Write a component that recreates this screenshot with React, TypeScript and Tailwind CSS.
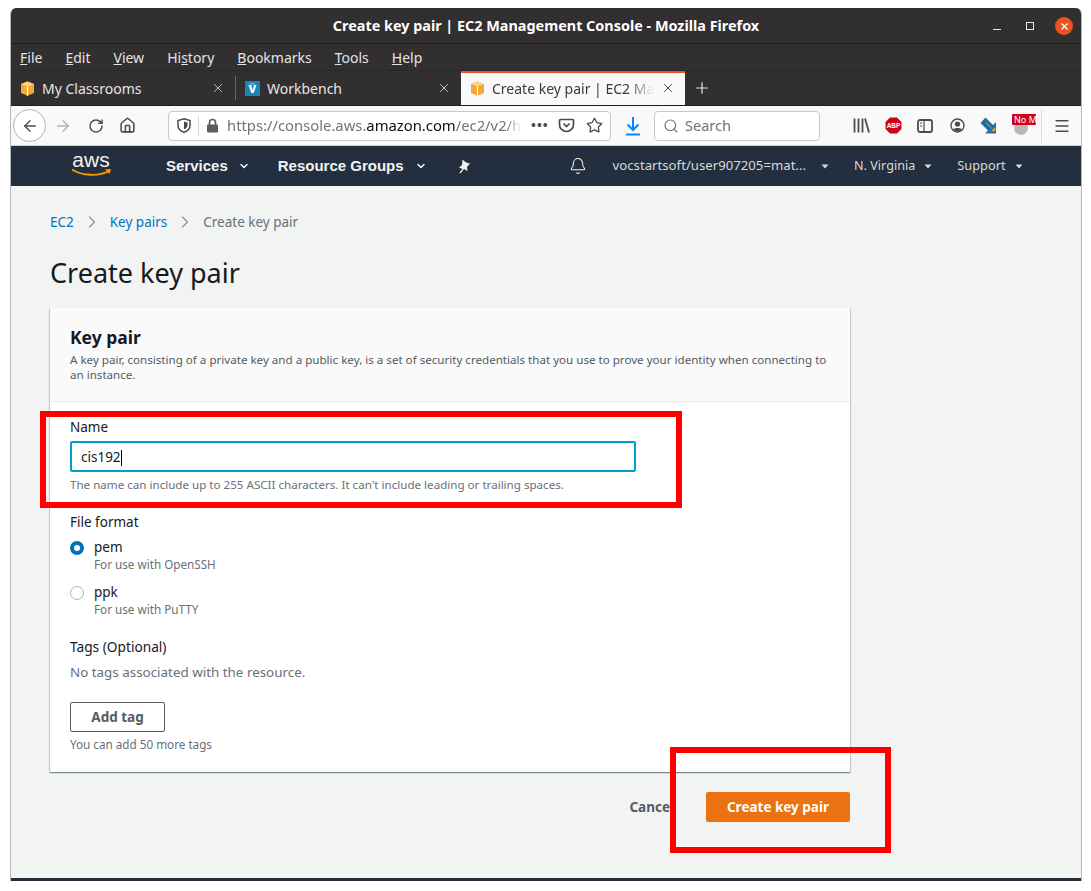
import React from 'react';
import {ArrowLeft, ArrowRight, RotateCw, Home, Star, Search, Bell, ChevronDown, ChevronRight, X, Plus, Menu} from 'lucide-react';

const font = "font-['Noto_Sans',sans-serif]";

const Caret = () => (
    <svg width="8" height="5" viewBox="0 0 8 5" className="shrink-0"><path d="M0.5 0.5h7L4 4.5z" fill="#d5dbdb" /></svg>
);

const BoxIcon = () => (
    <svg width="15" height="15" viewBox="0 0 15 15" className="shrink-0">
        <path d="M7.5 0.5 14 3v9l-6.5 2.8L1 12V3z" fill="#f2a93b" />
        <path d="M1 3l6.5 2.6L14 3 7.5 0.5z" fill="#fcd27e" />
        <path d="M7 5.5h1v9.2H7z" fill="#fff" />
    </svg>
);

const VIcon = () => (
    <svg width="15" height="15" viewBox="0 0 15 15" className="shrink-0">
        <rect width="15" height="15" fill="#1c85b5" />
        <path d="M3.5 4h2.7l1.4 5.5L9 4h2.5l-3 8H6.4z" fill="#fff" />
        <path d="M4 2.500h7L7.500 4z" fill="#7fd0ea" />
    </svg>
);

const Tab = ({icon, label, active, width}: {icon: React.ReactNode, label: string, active?: boolean, width: string}) => (
    <div className={`${width} h-full flex items-center pl-[9px] pr-[10px] gap-[7px] ${active ? 'bg-[#f9f9fa] text-[#3a3a3c] border-t-2 border-[#e95420] pb-[2px]' : 'text-[#e6e6e6]'}`}>
        {icon}
        <span className={`flex-1 min-w-0 text-[14px] whitespace-nowrap ${active ? '[mask-image:linear-gradient(to_right,black_84%,transparent)]' : ''}`}>{label}</span>
        <X size={14} strokeWidth={1.6} className={active ? 'text-[#3a3a3c] shrink-0' : 'text-[#cfcfcf] shrink-0'} />
    </div>
);

const Radio = ({checked, label, hint}: {checked?: boolean, label: string, hint: string}) => (
    <div className="flex">
        {checked
            ? <div className="w-[14px] h-[14px] mt-[4px] rounded-full border-[4px] border-[#0073bb] bg-white shrink-0" />
            : <div className="w-[14px] h-[14px] mt-[4px] rounded-full border border-[#aab7b8] bg-white shrink-0" />}
        <div className="ml-[10px]">
            <div className="text-[13.5px] leading-[20px] text-[#16191f]">{label}</div>
            <div className="text-[11.7px] leading-[15px] text-[#687078]">{hint}</div>
        </div>
    </div>
);

const App = () => {
    return (
        <div className={`relative w-[1091px] h-[891px] bg-white pt-[8px] pl-[10px] overflow-hidden ${font}`}>
            <div className="w-[1072px] h-[873px] flex flex-col rounded-t-[6px] overflow-hidden border-x border-[#b8b8b8]">
                {/* title bar */}
                <div className="relative h-[36px] shrink-0 bg-[#322f30] border-b border-[#1f1d1e] flex items-center justify-center text-white text-[14.4px] font-bold">
                    Create key pair | EC2 Management Console - Mozilla Firefox
                    <div className="absolute right-[8px] top-[9px] flex items-center">
                        <div className="w-[8px] h-[1.5px] bg-[#e8e8e8] mt-[7px]" />
                        <div className="w-[8px] h-[8px] border border-[#e8e8e8] ml-[25px] -mt-[1px]" />
                        <div className="w-[18px] h-[18px] rounded-full bg-[#e95420] flex items-center justify-center ml-[21px]"><X size={11} strokeWidth={2.4} className="text-white" /></div>
                    </div>
                </div>
                {/* menu */}
                <div className="h-[27px] shrink-0 bg-[#322f30] border-b border-[#2a2728] flex items-center pl-[9px] gap-[23px] text-[14px] text-[#e4e4e4]">
                    <span><u>F</u>ile</span><span><u>E</u>dit</span><span><u>V</u>iew</span><span>Hi<u>s</u>tory</span><span><u>B</u>ookmarks</span><span><u>T</u>ools</span><span><u>H</u>elp</span>
                </div>
                {/* tabs */}
                <div className="h-[34px] shrink-0 bg-[#322f30] flex items-center">
                    <Tab icon={<BoxIcon />} label="My Classrooms" width="w-[224px]" />
                    <div className="w-px h-[24px] bg-[#6a6869]" />
                    <Tab icon={<VIcon />} label="Workbench" width="w-[225px]" />
                    <Tab icon={<BoxIcon />} label="Create key pair | EC2 Man" width="w-[224px]" active />
                    <Plus size={18} strokeWidth={1.6} className="text-[#e6e6e6] ml-[8px]" />
                </div>
                {/* nav bar */}
                <div className="h-[41px] shrink-0 bg-[#f9f9fa] border-b border-[#cfcfd0] border-t border-t-[#1f1d1e] flex items-center text-[#4a4a4f] pl-[2px]">
                    <div className="w-[33px] h-[33px] rounded-full border border-[#b1b1b3] bg-white flex items-center justify-center"><ArrowLeft size={18} strokeWidth={1.7} /></div>
                    <ArrowRight size={18} strokeWidth={1.7} className="text-[#b1b1b3] ml-[8px]" />
                    <RotateCw size={16} strokeWidth={2.2} className="ml-[16px]" />
                    <Home size={17} strokeWidth={2.2} className="ml-[15px]" />
                    <div className="ml-[32px] w-[443px] h-[30px] bg-white border border-[#c8c8ca] rounded-[4px] flex items-center pl-[8px] text-[14.8px] text-[#737373] overflow-hidden">
                        <svg width="14" height="15" viewBox="0 0 14 15" className="shrink-0"><path d="M7 0.800 13 2.500v5c0 3.500-3 5.700-6 6.700-3-1-6-3.200-6-6.700v-5z" fill="none" stroke="#4a4a4f" strokeWidth="1.500" /><path d="M7 3.500 10.500 4.500v3c0 2-1.800 3.200-3.500 4z" fill="#4a4a4f" /></svg>
                        <div className="w-px h-[20px] bg-[#d7d7db] mx-[7px] shrink-0" />
                        <svg width="13" height="15" viewBox="0 0 13 15" className="shrink-0"><path d="M3.500 7V4.500a3 3 0 0 1 6 0V7" fill="none" stroke="#5c5c5f" strokeWidth="1.700" /><rect x="1" y="6.500" width="11" height="8" rx="1.200" fill="#5c5c5f" /></svg>
                        <span className="ml-[8px] w-[295px] shrink-0 whitespace-nowrap [mask-image:linear-gradient(to_right,black_94%,transparent)]">https://console.aws.<span className="text-[#111]">amazon.com</span>/ec2/v2/h</span>
                        <span className="ml-[9px] text-[#4a4a4f] font-bold text-[13px] tracking-[1px]">•••</span>
                        <svg width="17" height="17" viewBox="0 0 17 17" className="ml-[9px] shrink-0" fill="none" stroke="#4a4a4f" strokeWidth="1.7"><path d="M2.500 2.500h12a1 1 0 0 1 1 1v4a7 7 0 0 1-14 0v-4a1 1 0 0 1 1-1z" /><path d="M5.500 6.500l3 3 3-3" /></svg>
                        <Star size={17} strokeWidth={1.8} className="ml-[11px] shrink-0 text-[#4a4a4f]" />
                    </div>
                    <svg width="16" height="20" viewBox="0 0 16 20" className="ml-[14px] shrink-0" fill="none" stroke="#0a84ff" strokeWidth="2"><path d="M8 1v13M2.500 8.500 8 14l5.500-5.500M1 18.500h14" /></svg>
                    <div className="ml-[13px] w-[166px] h-[30px] bg-white border border-[#c8c8ca] rounded-[4px] flex items-center pl-[8px] gap-[6px] text-[14.5px] text-[#737373]"><Search size={16} strokeWidth={1.7} />Search</div>
                    <svg width="17" height="15" viewBox="0 0 17 15" className="ml-[33px] shrink-0" fill="none" stroke="#4a4a4f" strokeWidth="1.8"><path d="M1.500 0.500v14M5.500 0.500v14M9.500 0.500v14M12 0.500l4 14" /></svg>
                    <svg width="17" height="17" viewBox="0 0 17 17" className="ml-[15px] shrink-0"><path d="M5 0.500h7L16.500 5v7L12 16.500H5L0.500 12V5z" fill="#d0021b" /><text x="8.500" y="11" textAnchor="middle" fontSize="6.500" fontWeight="700" fill="#fff" fontFamily="Liberation Sans">ABP</text></svg>
                    <svg width="16" height="14" viewBox="0 0 16 14" className="ml-[15px] shrink-0" fill="none" stroke="#4a4a4f" strokeWidth="1.8"><rect x="1" y="1" width="14" height="12" rx="2" /><path d="M7 1v12M3 4h2M3 7h2" strokeWidth="1.200" /></svg>
                    <svg width="15" height="15" viewBox="0 0 15 15" className="ml-[17px] shrink-0"><circle cx="7.500" cy="7.500" r="6.500" fill="none" stroke="#4a4a4f" strokeWidth="1.400" /><circle cx="7.500" cy="6" r="2.600" fill="#4a4a4f" /><path d="M3 11.500c1.500-2 7.500-2 9 0-2 2-7 2-9 0z" fill="#4a4a4f" /></svg>
                    <svg width="17" height="17" viewBox="0 0 17 17" className="ml-[15px] shrink-0"><path d="M0.500 6 5.500 0.500 13 8l3-3v11.500H5l3-3z" fill="#1f6d9b" /><path d="M5.500 5.500 13 13l-2 1.500 4-0.500 0.500-4-2.500 2.500L7 6z" fill="#e8b23a" /></svg>
                    <div className="relative ml-[15px] w-[24px] h-[20px] shrink-0">
                        <div className="absolute left-[2px] top-[5px] w-[14px] h-[14px] rounded-full bg-[#b9b9b9]" />
                        <div className="absolute left-0 -top-[2px] w-[24px] h-[11px] bg-[#d0021b] rounded-[1px] text-white text-[9px] leading-[11px] pl-[2px] whitespace-nowrap">No M</div>
                    </div>
                    <div className="w-px h-[34px] bg-[#dcdcde] ml-[5px]" />
                    <Menu size={18} strokeWidth={1.7} className="ml-[11px]" />
                </div>
                {/* aws header */}
                <div className="h-[40px] shrink-0 bg-[#232f3e] flex items-center font-['Liberation_Sans',sans-serif] text-[#f2f3f3]">
                    <div className="ml-[59px] w-[42px] flex flex-col items-center">
                        <span className="text-[21px] leading-[18px] -mt-[5px]">aws</span>
                        <svg width="41" height="9" viewBox="0 0 41 9" className="-mt-[1px]"><path d="M1 1.500c10 6.500 27 7 37 1.500" fill="none" stroke="#f90" strokeWidth="1.800" /><path d="M34 1.500l6-0.500-1.500 5z" fill="#f90" /></svg>
                    </div>
                    <span className="ml-[54px] text-[15px] font-bold">Services</span>
                    <ChevronDown size={12} strokeWidth={3} className="ml-[10px]" />
                    <span className="ml-[28px] text-[15px] font-bold">Resource Groups</span>
                    <ChevronDown size={12} strokeWidth={3} className="ml-[11px]" />
                    <svg width="14" height="15" viewBox="0 0 14 15" className="ml-[30px] shrink-0"><path d="M5.500 0.500 9 3.500l4 1-3 3.500 0.500 4-3.500-2L3.500 14.500l-1-1 3-3.500-3.500-1.500 3-2.500z" fill="#f2f3f3" /></svg>
                    <Bell size={18} strokeWidth={1.4} className="ml-[98px]" />
                    <span className={`ml-[26px] text-[13.2px] text-[#d5dbdb] ${font}`}>vocstartsoft/user907205=mat...</span>
                    <div className="ml-[15px]"><Caret /></div>
                    <span className={`ml-[25px] text-[12.6px] text-[#d5dbdb] ${font}`}>N. Virginia</span>
                    <div className="ml-[9px]"><Caret /></div>
                    <span className={`ml-[25px] text-[12.8px] text-[#d5dbdb] ${font}`}>Support</span>
                    <div className="ml-[9px]"><Caret /></div>
                </div>
                {/* page */}
                <div className="flex-1 bg-[#f2f3f3] flex flex-col pl-[39px]">
                    <div className="h-[28px] mt-[22px] flex items-center text-[13.5px] text-[#687078]">
                        <span className="text-[#0073bb]">EC2</span>
                        <ChevronRight size={20} strokeWidth={1.5} className="mx-[8px] text-[#879596]" />
                        <span className="text-[#0073bb]">Key pairs</span>
                        <ChevronRight size={20} strokeWidth={1.5} className="mx-[8px] text-[#879596]" />
                        <span>Create key pair</span>
                    </div>
                    <h1 className="mt-[19px] text-[27px] leading-[36px] text-[#16191f]">Create key pair</h1>
                    <div className="mt-[17px] w-[800px] h-[464px] bg-white shadow-[0_1px_1px_0_rgba(0,28,36,0.3),1px_1px_1px_0_rgba(0,28,36,0.15),-1px_1px_1px_0_rgba(0,28,36,0.15)] flex flex-col">
                        <div className="h-[94px] bg-[#fafafa] border-b border-[#eaeded] px-[20px] pt-[17px]">
                            <h2 className="text-[17.5px] font-bold leading-[24px] text-[#16191f]">Key pair</h2>
                            <p className="mt-[3px] text-[11.6px] leading-[15px] text-[#545b64] w-[768px]">A key pair, consisting of a private key and a public key, is a set of security credentials that you use to prove your identity when connecting to an instance.</p>
                        </div>
                        <div className="px-[20px] pt-[16px] flex flex-col">
                            <label className="text-[13.5px] leading-[18px] text-[#16191f]">Name</label>
                            <div className="mt-[5px] w-[566px] h-[31px] border-2 border-[#00a1c9] rounded-[2px] flex items-center pl-[9px] pt-[2px] text-[13.5px] text-[#16191f]">cis192<span className="w-px h-[16px] bg-black" /></div>
                            <p className="mt-[5px] text-[11.6px] leading-[15px] text-[#687078]">The name can include up to 255 ASCII characters. It can't include leading or trailing spaces.</p>
                            <label className="mt-[21px] text-[13.5px] leading-[18px] text-[#16191f]">File format</label>
                            <div className="mt-[6px] flex flex-col gap-[10px]">
                                <Radio checked label="pem" hint="For use with OpenSSH" />
                                <Radio label="ppk" hint="For use with PuTTY" />
                            </div>
                            <label className="mt-[21px] text-[13.7px] leading-[18px] text-[#16191f]">Tags (Optional)</label>
                            <p className="mt-[7px] text-[13.4px] leading-[18px] text-[#687078]">No tags associated with the resource.</p>
                            <button className="mt-[21px] w-[95px] h-[30px] border border-[#545b64] rounded-[2px] text-[13.5px] font-bold text-[#545b64] bg-white">Add tag</button>
                            <p className="mt-[5px] text-[11.7px] leading-[15px] text-[#687078]">You can add 50 more tags</p>
                        </div>
                    </div>
                    <div className="w-[800px] mt-[20px] flex items-center justify-end">
                        <span className="text-[13.5px] font-bold text-[#545b64] mr-[32px]">Cancel</span>
                        <button className="w-[144px] h-[30px] bg-[#ec7211] rounded-[2px] text-white text-[13.5px] font-bold">Create key pair</button>
                    </div>
                </div>
                <div className="h-[3px] shrink-0 bg-[#232f3e]" />
            </div>
            {/* red annotation boxes */}
            <div className="absolute left-[40px] top-[411px] w-[642px] h-[97px] border-[6px] border-[#ff0000]" />
            <div className="absolute left-[670px] top-[747px] w-[221px] h-[106px] border-[6px] border-[#ff0000]" />
        </div>
    );
};

export default App;
